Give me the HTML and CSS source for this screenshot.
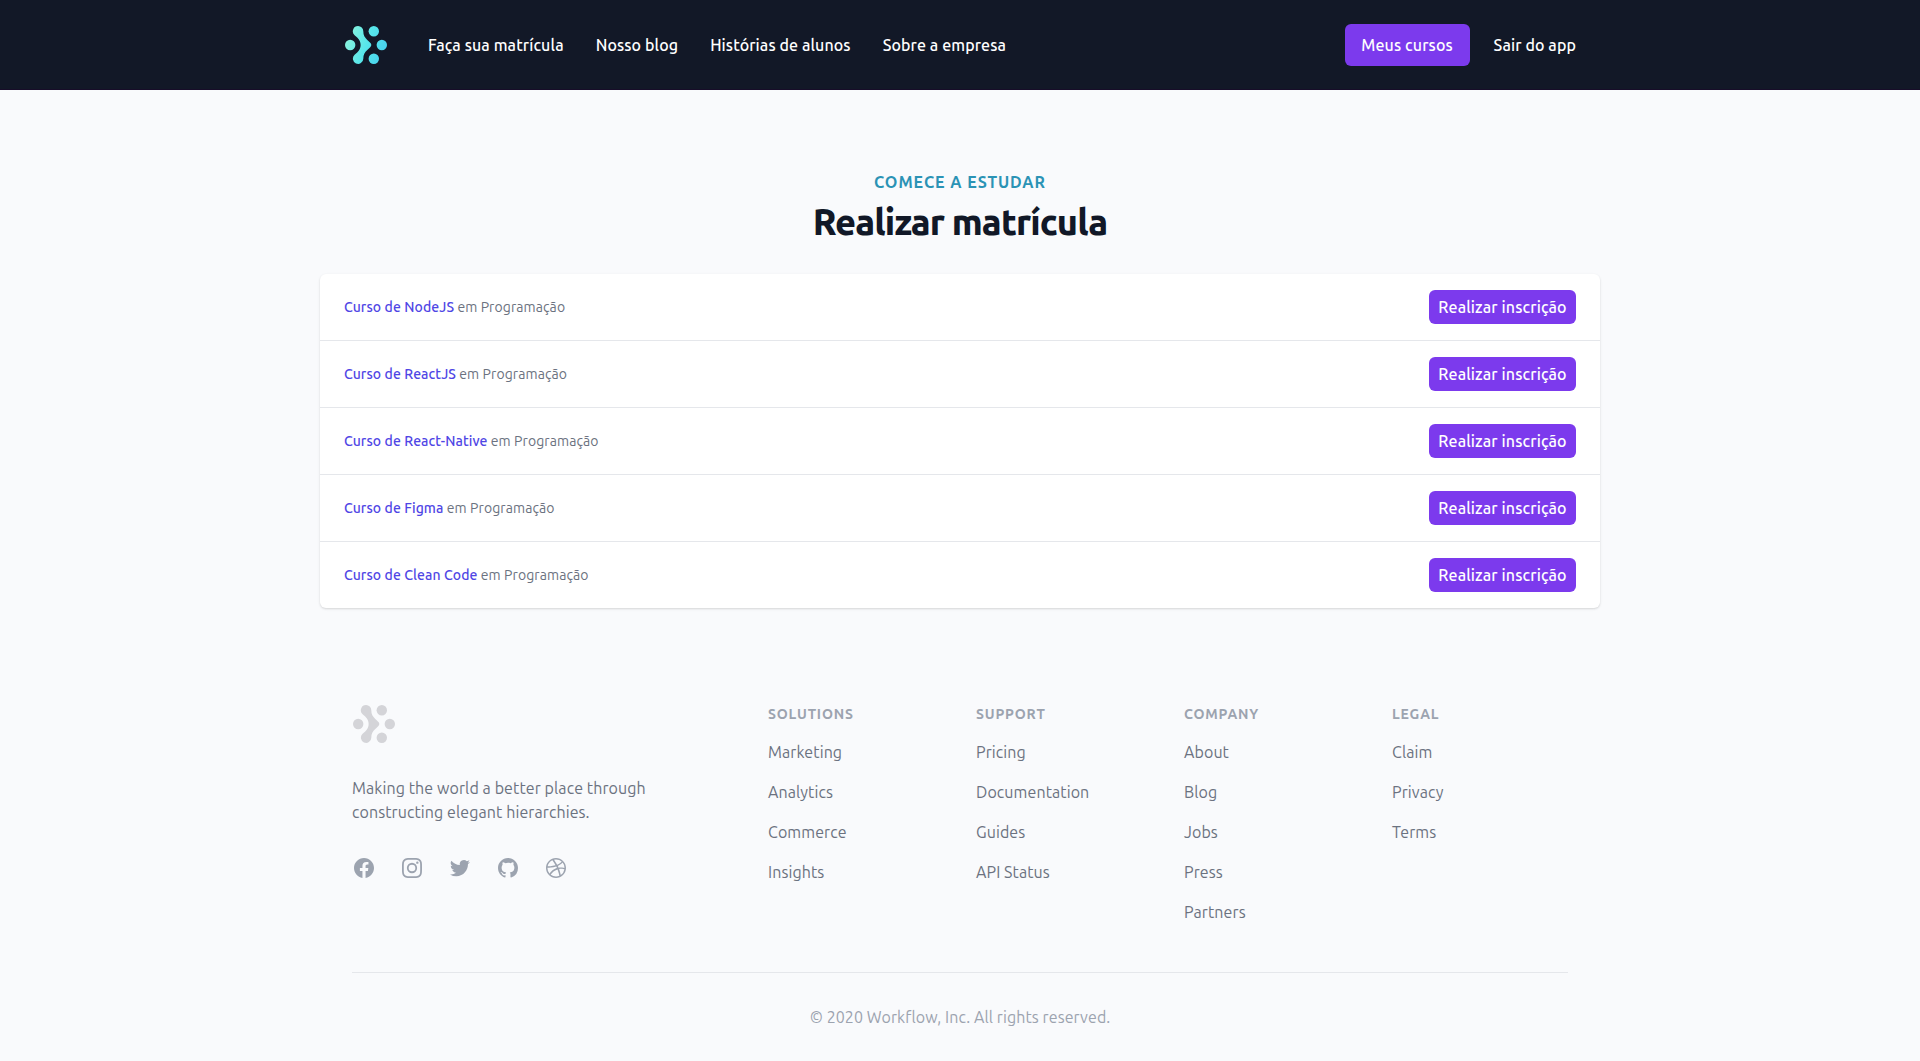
FILE: index.html
```
<!DOCTYPE html>
<html lang="pt-BR">
<head>
<meta charset="utf-8">
<title>Realizar matrícula</title>
<link rel="stylesheet" href="styles.css">
</head>
<body>
<header class="header">
  <div class="header-inner">
    <svg class="logo" viewBox="0 0 44 40" aria-hidden="true">
      <defs>
        <linearGradient id="brand" gradientUnits="userSpaceOnUse" x1="1" y1="12" x2="43" y2="27">
          <stop offset="0" stop-color="#8cf3dc"/>
          <stop offset=".5" stop-color="#58e6ea"/>
          <stop offset="1" stop-color="#46d0ee"/>
        </linearGradient>
        <g id="mark">
          <circle cx="6.2" cy="20" r="5.2"/>
          <circle cx="29.8" cy="6.3" r="5.2"/>
          <circle cx="37.8" cy="20" r="5.2"/>
          <circle cx="29.8" cy="33.7" r="5.2"/>
          <path d="M14.1 1.1a5.2 5.2 0 0 1 5.2 5.2c0 3.9 1.4 6.2 4 8.7l2.9 2.8a3.1 3.1 0 0 1 0 4.4l-2.9 2.8c-2.6 2.5-4 4.8-4 8.7a5.2 5.2 0 1 1-8.7-3.9l2.600-2.300c4.600-4.200 4.600-10.800 0-15l-2.600-2.300a5.200 5.200 0 0 1 3.500-9.100z"/>
        </g>
      </defs>
      <use href="#mark" fill="url(#brand)"/>
    </svg>
    <nav class="nav">
      <a href="#">Faça sua matrícula</a>
      <a href="#">Nosso blog</a>
      <a href="#">Histórias de alunos</a>
      <a href="#">Sobre a empresa</a>
    </nav>
    <div class="account">
      <a class="button button-large" href="#">Meus cursos</a>
      <a href="#">Sair do app</a>
    </div>
  </div>
</header>

<main class="main">
  <p class="eyebrow">Comece a estudar</p>
  <h1 class="title">Realizar matrícula</h1>
  <ul class="courses">
    <li class="course"><p><a href="#">Curso de NodeJS</a> <span>em Programação</span></p><button class="button">Realizar inscrição</button></li>
    <li class="course"><p><a href="#">Curso de ReactJS</a> <span>em Programação</span></p><button class="button">Realizar inscrição</button></li>
    <li class="course"><p><a href="#">Curso de React-Native</a> <span>em Programação</span></p><button class="button">Realizar inscrição</button></li>
    <li class="course"><p><a href="#">Curso de Figma</a> <span>em Programação</span></p><button class="button">Realizar inscrição</button></li>
    <li class="course"><p><a href="#">Curso de Clean Code</a> <span>em Programação</span></p><button class="button">Realizar inscrição</button></li>
  </ul>
</main>

<footer class="footer">
  <div class="footer-top">
    <div class="about">
      <svg class="logo logo-muted" viewBox="0 0 44 40" aria-hidden="true"><use href="#mark"/></svg>
      <p class="mission">Making the world a better place through<br>constructing elegant hierarchies.</p>
      <div class="social">
        <svg viewBox="0 0 24 24"><path fill-rule="evenodd" d="M22 12c0-5.523-4.477-10-10-10S2 6.477 2 12c0 4.991 3.657 9.128 8.438 9.878v-6.987h-2.540V12h2.540V9.797c0-2.506 1.492-3.890 3.777-3.890 1.094 0 2.238.195 2.238.195v2.460h-1.260c-1.243 0-1.630.771-1.630 1.562V12h2.773l-.443 2.890h-2.330v6.988C18.343 21.128 22 16.991 22 12z"/></svg>
        <svg viewBox="0 0 24 24"><path fill-rule="evenodd" d="M12.315 2c2.430 0 2.784.013 3.808.060 1.064.049 1.791.218 2.427.465a4.902 4.902 0 0 1 1.772 1.153 4.902 4.902 0 0 1 1.153 1.772c.247.636.416 1.363.465 2.427.048 1.067.060 1.407.060 4.123v.080c0 2.643-.012 2.987-.060 4.043-.049 1.064-.218 1.791-.465 2.427a4.902 4.902 0 0 1-1.153 1.772 4.902 4.902 0 0 1-1.772 1.153c-.636.247-1.363.416-2.427.465-1.067.048-1.407.060-4.123.060h-.080c-2.643 0-2.987-.012-4.043-.060-1.064-.049-1.791-.218-2.427-.465a4.902 4.902 0 0 1-1.772-1.153 4.902 4.902 0 0 1-1.153-1.772c-.247-.636-.416-1.363-.465-2.427-.047-1.024-.060-1.379-.060-3.808v-.630c0-2.430.013-2.784.060-3.808.049-1.064.218-1.791.465-2.427a4.902 4.902 0 0 1 1.153-1.772A4.902 4.902 0 0 1 5.450 2.525c.636-.247 1.363-.416 2.427-.465C8.901 2.013 9.256 2 11.685 2h.630zm-.081 1.802h-.468c-2.456 0-2.784.011-3.807.058-.975.045-1.504.207-1.857.344-.467.182-.800.398-1.150.748-.350.350-.566.683-.748 1.150-.137.353-.300.882-.344 1.857-.047 1.023-.058 1.351-.058 3.807v.468c0 2.456.011 2.784.058 3.807.045.975.207 1.504.344 1.857.182.466.399.800.748 1.150.350.350.683.566 1.150.748.353.137.882.300 1.857.344 1.054.048 1.370.058 4.041.058h.080c2.597 0 2.917-.010 3.960-.058.976-.045 1.505-.207 1.858-.344.466-.182.800-.398 1.150-.748.350-.350.566-.683.748-1.150.137-.353.300-.882.344-1.857.048-1.055.058-1.370.058-4.041v-.080c0-2.597-.010-2.917-.058-3.960-.045-.976-.207-1.505-.344-1.858a3.097 3.097 0 0 0-.748-1.150 3.098 3.098 0 0 0-1.150-.748c-.353-.137-.882-.300-1.857-.344-1.023-.047-1.351-.058-3.807-.058zM12 6.865a5.135 5.135 0 1 1 0 10.270 5.135 5.135 0 0 1 0-10.270zm0 1.802a3.333 3.333 0 1 0 0 6.666 3.333 3.333 0 0 0 0-6.666zm5.338-3.205a1.200 1.200 0 1 1 0 2.400 1.200 1.200 0 0 1 0-2.400z"/></svg>
        <svg viewBox="0 0 24 24"><path d="M8.290 20.251c7.547 0 11.675-6.253 11.675-11.675 0-.178 0-.355-.012-.530A8.348 8.348 0 0 0 22 5.920a8.190 8.190 0 0 1-2.357.646 4.118 4.118 0 0 0 1.804-2.270 8.224 8.224 0 0 1-2.605.996 4.107 4.107 0 0 0-6.993 3.743 11.650 11.650 0 0 1-8.457-4.287 4.106 4.106 0 0 0 1.270 5.477A4.072 4.072 0 0 1 2.800 9.713v.052a4.105 4.105 0 0 0 3.292 4.022 4.095 4.095 0 0 1-1.853.070 4.108 4.108 0 0 0 3.834 2.850A8.233 8.233 0 0 1 2 18.407a11.616 11.616 0 0 0 6.290 1.840"/></svg>
        <svg viewBox="0 0 24 24"><path fill-rule="evenodd" d="M12 2C6.477 2 2 6.484 2 12.017c0 4.425 2.865 8.180 6.839 9.504.500.092.682-.217.682-.483 0-.237-.008-.868-.013-1.703-2.782.605-3.369-1.343-3.369-1.343-.454-1.158-1.110-1.466-1.110-1.466-.908-.620.069-.608.069-.608 1.003.070 1.531 1.032 1.531 1.032.892 1.530 2.341 1.088 2.910.832.092-.647.350-1.088.636-1.338-2.220-.253-4.555-1.113-4.555-4.951 0-1.093.390-1.988 1.029-2.688-.103-.253-.446-1.272.098-2.650 0 0 .840-.270 2.750 1.026A9.564 9.564 0 0 1 12 6.844c.850.004 1.705.115 2.504.337 1.909-1.296 2.747-1.027 2.747-1.027.546 1.379.202 2.398.100 2.651.640.700 1.028 1.595 1.028 2.688 0 3.848-2.339 4.695-4.566 4.943.359.309.678.920.678 1.855 0 1.338-.012 2.419-.012 2.747 0 .268.180.580.688.482A10.019 10.019 0 0 0 22 12.017C22 6.484 17.522 2 12 2z"/></svg>
        <svg viewBox="0 0 24 24"><path fill-rule="evenodd" d="M12 2C6.480 2 2 6.480 2 12s4.480 10 10 10c5.510 0 10-4.480 10-10S17.510 2 12 2zm6.605 4.610a8.502 8.502 0 0 1 1.930 5.314c-.281-.054-3.101-.629-5.943-.271-.065-.141-.120-.293-.184-.445a25.416 25.416 0 0 0-.564-1.236c3.145-1.280 4.577-3.124 4.761-3.362zM12 3.475c2.170 0 4.154.813 5.662 2.148-.152.216-1.443 1.941-4.480 3.080-1.399-2.570-2.950-4.675-3.189-5A8.687 8.687 0 0 1 12 3.475zm-3.633.803a53.896 53.896 0 0 1 3.167 4.935c-3.992 1.063-7.517 1.040-7.896 1.040a8.581 8.581 0 0 1 4.729-5.975zM3.453 12.010v-.260c.370.010 4.512.065 8.775-1.215.250.477.477.965.694 1.453-.109.033-.228.065-.336.098-4.404 1.420-6.747 5.303-6.942 5.629a8.522 8.522 0 0 1-2.190-5.705zM12 20.547a8.482 8.482 0 0 1-5.239-1.800c.152-.315 1.888-3.656 6.703-5.337.022-.010.033-.010.054-.022a35.318 35.318 0 0 1 1.823 6.475 8.400 8.400 0 0 1-3.341.684zm4.761-1.465c-.086-.520-.542-3.015-1.659-6.084 2.679-.423 5.022.271 5.314.369a8.468 8.468 0 0 1-3.655 5.715z"/></svg>
      </div>
    </div>
    <div class="link-columns">
      <div><h2>Solutions</h2><ul><li>Marketing</li><li>Analytics</li><li>Commerce</li><li>Insights</li></ul></div>
      <div><h2>Support</h2><ul><li>Pricing</li><li>Documentation</li><li>Guides</li><li>API Status</li></ul></div>
      <div><h2>Company</h2><ul><li>About</li><li>Blog</li><li>Jobs</li><li>Press</li><li>Partners</li></ul></div>
      <div><h2>Legal</h2><ul><li>Claim</li><li>Privacy</li><li>Terms</li></ul></div>
    </div>
  </div>
  <p class="copyright">© 2020 Workflow, Inc. All rights reserved.</p>
</footer>
</body>
</html>
```
FILE: styles.css
```
* { box-sizing: border-box; margin: 0; padding: 0; }
body {
  background: #f9fafc;
  color: #6b7280;
  font: 400 16px/24px Ubuntu, "Open Sans", sans-serif;
  letter-spacing: .09px;
}
a { color: inherit; text-decoration: none; }
ul { list-style: none; }

.header { height: 90px; background: #121827; border-bottom: 1px solid #170d29; }
.header-inner {
  display: flex;
  align-items: center;
  width: 1280px;
  height: 90px;
  margin: 0 auto;
  padding: 0 24px;
  color: #fff;
  font-weight: 500;
  letter-spacing: .1px;
}
.logo { display: block; width: 44px; height: 40px; }
.nav { display: flex; gap: 32px; margin-left: 40px; white-space: nowrap; }
.account { display: flex; align-items: center; gap: 24px; margin-left: auto; }

.button {
  width: 147px;
  height: 34px;
  border: 0;
  border-radius: 6px;
  background: #7c3aed;
  color: #fff;
  font: inherit;
  font-weight: 500;
  letter-spacing: .13px;
  text-align: center;
  white-space: nowrap;
}
.button-large { width: 125px; height: 42px; line-height: 42px; }

.main { width: 1280px; margin: 0 auto; padding-top: 80px; }
.eyebrow {
  color: #2b93b5;
  font-weight: 700;
  letter-spacing: .93px;
  text-align: center;
  text-transform: uppercase;
}
.title {
  margin: 8px 0 32px;
  color: #111827;
  font-size: 36px;
  font-weight: 800;
  line-height: 40px;
  letter-spacing: -.025em;
  text-align: center;
}
.courses {
  background: #fff;
  border-radius: 6px;
  box-shadow: 0 1px 3px rgba(0, 0, 0, .1), 0 1px 2px rgba(0, 0, 0, .06);
}
.course {
  display: flex;
  align-items: center;
  justify-content: space-between;
  padding: 16px 24px;
}
.course + .course { border-top: 1px solid #e5e7eb; }
.course p { font-size: 14px; line-height: 20px; }
.course a { color: #4f46e5; font-weight: 500; }

.footer { width: 1216px; margin: 96px auto 0; }
.footer-top {
  display: grid;
  grid-template-columns: 384px 800px;
  gap: 32px;
  padding-bottom: 48px;
  border-bottom: 1px solid #e5e7eb;
}
.logo-muted { fill: #d4d4d8; }
.mission { margin: 32px 0; }
.social { display: flex; gap: 24px; }
.social svg { width: 24px; height: 24px; fill: #9ca3af; }
.link-columns { display: grid; grid-template-columns: repeat(4, 176px); gap: 32px; }
.link-columns h2 {
  margin-bottom: 16px;
  color: #9ca3af;
  font-size: 14px;
  font-weight: 700;
  line-height: 20px;
  letter-spacing: .82px;
  text-transform: uppercase;
}
.link-columns ul { display: grid; gap: 16px; }
.copyright { padding: 32px 0; color: #9ca3af; text-align: center; }
```
